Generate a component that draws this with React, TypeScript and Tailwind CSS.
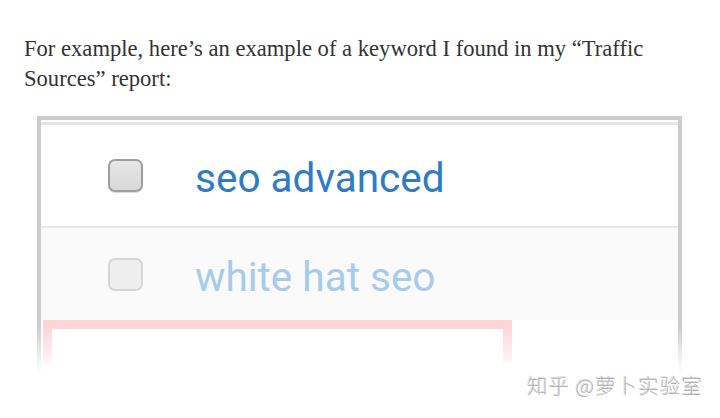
import React from "react";

function Checkbox({ faded }: { faded?: boolean }) {
  return (
    <div
      className={
        faded
          ? "w-[35px] h-[33px] rounded-[7px] border-2 border-[#d6d6d6] bg-[#eeeeee] shrink-0"
          : "w-[35px] h-[33px] rounded-[7px] border-2 border-[#9e9e9e] bg-gradient-to-b from-[#e6e6e6] to-[#d9d9d9] shadow-[0_1px_1px_rgba(0,0,0,0.15)] shrink-0"
      }
    />
  );
}

export default function App() {
  return (
    <div className="w-[720px] h-[418px] bg-white overflow-hidden relative">
      <p
        className="pl-[24px] pr-[50px] pt-[34px] text-[22.6px] leading-[30px] text-[#333333]"
        style={{ fontFamily: '"Liberation Serif", "Times New Roman", serif' }}
      >
        For example, here’s an example of a keyword I found in my “Traffic Sources” report:
      </p>

      <div className="relative ml-[37px] mt-[22px] w-[645px] h-[256px] border-t-4 border-l-4 border-r-4 border-[#cccccc] bg-white">
        <div className="mt-[2px] h-[3px] bg-[#e6e6e6]" />
        <div
          className="flex items-center h-[101px] pl-[67px] gap-[52px]"
          style={{ fontFamily: "Roboto, Arial, sans-serif" }}
        >
          <Checkbox />
          <span className="text-[40.5px] text-[#2f7cc5] leading-none pt-[6px]">seo advanced</span>
        </div>
        <div className="h-[2px] bg-[#e8e8e8]" />
        <div
          className="flex items-center h-[92px] pl-[67px] gap-[52px] bg-[#fafafa]"
          style={{ fontFamily: "Roboto, Arial, sans-serif" }}
        >
          <Checkbox faded />
          <span className="text-[40.5px] text-[#a6cbec] leading-none pt-[6px]">white hat seo</span>
        </div>
        <div className="ml-[2px] w-[469px] h-[44px] border-t-[9px] border-l-[9px] border-r-[9px] border-[#fdd4d7] bg-white" />
        <div className="absolute left-[-8px] right-[-8px] top-[206px] bottom-[-12px] bg-gradient-to-b from-white/0 via-white/90 via-70% to-white" />
      </div>

      <div
        className="absolute left-[527px] top-[370px] text-[20.5px] font-light text-[#b4b4b4] tracking-[1px]"
        style={{
          fontFamily: '"Noto Sans CJK SC", sans-serif',
          textShadow: "1px 1px 0 #ffffff, -1px -1px 0 #dcdcdc",
        }}
      >
        知乎 @萝卜实验室
      </div>
    </div>
  );
}
